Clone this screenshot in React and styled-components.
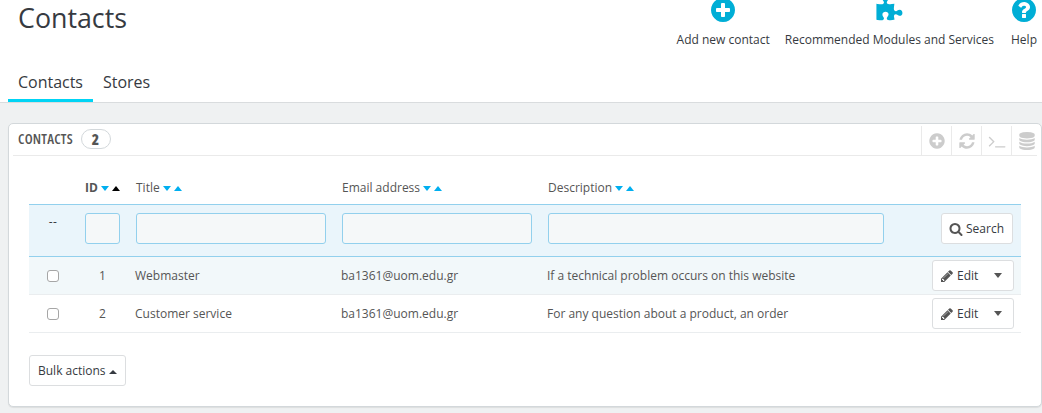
import React from "react";
import styled, { createGlobalStyle, css } from "styled-components";

const Global = createGlobalStyle`
  * { box-sizing: border-box; }
  html, body { margin: 0; height: 100%; overflow: hidden; }
  body {
    background: #eff1f2;
    color: #555;
    font: 12px/18px "Open Sans", "Noto Sans", sans-serif;
  }
`;

const glyphs = {
  plus: "M1344 960v-128q0-26-19-45t-45-19h-256v-256q0-26-19-45t-45-19h-128q-26 0-45 19t-19 45v256h-256q-26 0-45 19t-19 45v128q0 26 19 45t45 19h256v256q0 26 19 45t45 19h128q26 0 45-19t19-45v-256h256q26 0 45-19t19-45zm320-64q0 209-103 385.5t-279.5 279.5-385.5 103-385.5-103-279.5-279.5-103-385.5 103-385.5 279.5-279.5 385.5-103 385.5 103 279.5 279.5 103 385.5z",
  refresh: "M1639 1056q0 5-1 7-64 268-268 434.5t-478 166.5q-146 0-282.5-55t-243.5-157l-129 129q-19 19-45 19t-45-19-19-45v-448q0-26 19-45t45-19h448q26 0 45 19t19 45-19 45l-137 137q71 66 161 102t187 36q134 0 250-65t186-179q11-17 53-117 8-23 30-23h192q13 0 22.5 9.5t9.5 22.5zm25-800v448q0 26-19 45t-45 19h-448q-26 0-45-19t-19-45 19-45l138-138q-148-137-349-137-134 0-250 65t-186 179q-11 17-53 117-8 23-30 23h-199q-13 0-22.5-9.5t-9.5-22.5v-7q65-268 270-434.5t480-166.5q146 0 284 55.5t245 156.5l130-129q19-19 45-19t45 19 19 45z",
  terminal: "M649 983l-466 466q-10 10-23 10t-23-10l-50-50q-10-10-10-23t10-23l393-393-393-393q-10-10-10-23t10-23l50-50q10-10 23-10t23 10l466 466q10 10 10 23t-10 23zm1079 457v64q0 14-9 23t-23 9h-960q-14 0-23-9t-9-23v-64q0-14 9-23t23-9h960q14 0 23 9t9 23z",
  database: "M896 768q237 0 443-43t325-127v170q0 69-103 128t-280 93.5-385 34.5-385-34.5-280-93.5-103-128v-170q119 84 325 127t443 43zm0 768q237 0 443-43t325-127v170q0 69-103 128t-280 93.5-385 34.5-385-34.5-280-93.5-103-128v-170q119 84 325 127t443 43zm0-384q237 0 443-43t325-127v170q0 69-103 128t-280 93.5-385 34.5-385-34.5-280-93.5-103-128v-170q119 84 325 127t443 43zm0-1152q208 0 385 34.5t280 93.5 103 128v128q0 69-103 128t-280 93.5-385 34.5-385-34.5-280-93.5-103-128v-128q0-69 103-128t280-93.5 385-34.5z",
  search: "M1216 832q0-185-131.5-316.5t-316.5-131.5-316.5 131.5-131.5 316.5 131.5 316.5 316.5 131.5 316.5-131.5 131.5-316.5zm512 832q0 52-38 90t-90 38q-54 0-90-38l-343-342q-179 124-399 124-143 0-273.5-55.5t-225-150-150-225-55.5-273.5 55.5-273.5 150-225 225-150 273.5-55.5 273.5 55.5 225 150 150 225 55.5 273.5q0 220-124 399l343 343q37 37 37 90z",
  pencil: "M491 1536l91-91-235-235-91 91v107h128v128h107zm523-928q0-22-22-22-10 0-17 7l-542 542q-7 7-7 17 0 22 22 22 10 0 17-7l542-542q7-7 7-17zm-54-192l416 416-832 832h-416v-416zm683 96q0 53-37 90l-166 166-416-416 166-165q36-38 90-38 53 0 91 38l235 234q37 39 37 91z",
  help: "M1024 1376v-192q0-14-9-23t-23-9h-192q-14 0-23 9t-9 23v192q0 14 9 23t23 9h192q14 0 23-9t9-23zm256-672q0-88-55.5-163t-138.5-116-170-41q-243 0-371 213-15 24 8 42l132 100q7 6 19 6 16 0 25-12 53-68 86-92 34-24 86-24 48 0 85.5 26t37.5 59q0 38-20 61t-68 45q-63 28-115.5 86.5t-52.5 125.5v36q0 14 9 23t23 9h192q14 0 23-9t9-23q0-19 21.5-49.5t54.5-49.5q32-18 49-28.5t46-35 44.5-48 28-60.5 12.5-81zm384 192q0 209-103 385.5t-279.5 279.5-385.5 103-385.5-103-279.5-279.5-103-385.5 103-385.5 279.5-279.5 385.5-103 385.5 103 279.5 279.5 103 385.5z",
  puzzle: "M1755 1082q0 81-44.5 135t-123.5 54q-41 0-77.5-17.5t-59-38-56.5-38-71-17.5q-110 0-110 124 0 39 16 115t15 115v5q-22 0-33 1-34 3-97.5 11.5t-115.5 13.5-98 5q-61 0-103-26.5t-42-83.5q0-37 17.5-71t38-56.5 38-59 17.5-77.5q0-79-54-123.5t-135-44.5q-84 0-143 45.5t-59 127.5q0 43 15 83t33.5 64.5 33.5 53 15 50.5q0 45-46 89-37 35-117 35-95 0-245-24-9-2-27.5-4t-27.5-4l-13-2q-1 0-3-1-2 0-2-1v-1024q2 1 17.5 3.5t34 5 21.5 3.5q150 24 245 24 80 0 117-35 46-44 46-89 0-22-15-50.5t-33.5-53-33.5-64.5-15-83q0-82 59-127.5t144-45.5q80 0 134 44.5t54 123.5q0 41-17.5 77.5t-38 59-38 56.5-17.5 71q0 57 42 83.5t103 26.5q64 0 180-15t163-17v2q-1 2-3.5 17.5t-5 34-3.5 21.5q-24 150-24 245 0 80 35 117 44 46 89 46 22 0 50.5-15t53-33.5 64.5-33.5 83-15q82 0 127.5 59t45.5 143z",
};

const Svg = styled.svg`
  display: block;
  flex: none;
  width: ${(p) => p.$size}px;
  height: ${(p) => p.$size}px;
  fill: currentColor;
`;

const Icon = ({ name, size }) => (
  <Svg viewBox="0 0 1792 1792" $size={size} aria-hidden="true">
    <path d={glyphs[name]} />
  </Svg>
);

const Page = styled.div`
  width: 1042px;
  height: 413px;
  overflow: hidden;
`;

const Header = styled.header`
  display: grid;
  grid-template-rows: 63px 39px;
  height: 103px;
  background: #fff;
  border-bottom: 1px solid #d9dcde;
`;

const TitleBar = styled.div`
  display: flex;
  justify-content: space-between;
  align-items: flex-start;
  padding: 0 5px 0 18px;
`;

const Title = styled.h1`
  margin: 0;
  color: #363a41;
  font-size: 26.8px;
  font-weight: 400;
  line-height: 36px;
`;

const Tools = styled.nav`
  display: flex;
  gap: 15px;
`;

const Tool = styled.a`
  display: flex;
  flex-direction: column;
  align-items: center;
  color: #363a41;
  font-size: 12px;
  white-space: nowrap;

  &:last-child { margin: 0 -1px 0 1px; }

  svg {
    color: #00aed6;
    margin: -4px 0 7px;
  }
`;

const Tabs = styled.nav`
  display: flex;
  padding-left: 8px;
`;

const Tab = styled.a`
  padding: 7px 10px 0;
  color: #363a41;
  font-size: 16px;
  letter-spacing: -0.02px;
  line-height: 24px;
  ${(p) => p.$active && css`border-bottom: 3px solid #00d4f5;`}
`;

const Panel = styled.section`
  width: 1034px;
  height: 284px;
  margin: 20px 0 0 8px;
  background: #fff;
  border: 1px solid #d3d8db;
  border-radius: 5px;
  box-shadow: 0 1px 1px rgba(0, 0, 0, 0.08);
`;

const PanelHead = styled.div`
  display: flex;
  justify-content: space-between;
  height: 32px;
  margin: 0 4px;
  padding-left: 5px;
  border-bottom: 1px solid #eaeaea;
`;

const PanelTitle = styled.div`
  display: flex;
  align-items: center;
  gap: 9px;
  padding-bottom: 1px;
  color: #555;
`;

const Caption = styled.span`
  width: 54px;
  font-size: 14px;
  font-weight: 600;
  font-stretch: 75%;
  letter-spacing: 0.2px;
  white-space: nowrap;
`;

const Badge = styled.span`
  width: 30px;
  height: 20px;
  padding-right: 1px;
  border: 1px solid #d3d8db;
  border-radius: 10px;
  font-size: 15px;
  font-weight: 800;
  font-stretch: 75%;
  line-height: 18px;
  text-align: center;
`;

const PanelTools = styled.div`
  display: flex;
  margin-right: -4px;
  padding-top: 2px;
`;

const PanelTool = styled.a`
  display: flex;
  justify-content: center;
  align-items: center;
  width: 30px;
  border-left: 1px solid #eaeaea;
  color: #ccc;
`;

const Content = styled.div`
  padding: 22px 20px 0;
`;

const Row = styled.div`
  display: grid;
  grid-template-columns: 48px 51px 206px 206px 352px 129px;
  align-items: center;
`;

const HeadRow = styled(Row)`
  height: 26px;
  padding-bottom: 6px;
`;

const FilterRow = styled(Row)`
  height: 53px;
  align-items: start;
  padding-top: 8px;
  background: #eaf5fb;
  border-top: 1px solid #92d0ed;
  border-bottom: 1px solid #92d0ed;
`;

const DataRow = styled(Row)`
  height: 38px;
  border-bottom: 1px solid #eaedef;
  background: ${(p) => (p.$shaded ? "#f2f8fa" : "#fff")};
`;

const HeadCell = styled.div`
  display: flex;
  align-items: center;
  padding-left: 8px;
  height: 18px;
  white-space: nowrap;
  font-weight: ${(p) => (p.$sorted ? 700 : 400)};
`;

const Sorts = styled.span`
  display: flex;
  gap: 3px;
  margin-left: 3px;
`;

const Arrow = styled.i`
  border: 4px solid transparent;
  color: ${(p) => p.$color || "#00aff0"};
  ${(p) =>
    p.$up
      ? css`border-top: 0; border-bottom: 5px solid currentColor;`
      : css`border-bottom: 0; border-top: 5px solid currentColor;`}
`;

const EditArrow = styled(Arrow)`
  margin-right: 3px;
`;

const BulkArrow = styled(Arrow)`
  margin-top: 3px;
  border-bottom-width: 4px;
`;

const Cell = styled.div`
  padding-left: 7px;
  white-space: nowrap;
  ${(p) => p.$center && css`padding: 0; text-align: center;`}
`;

const Placeholder = styled(Cell)`
  color: #363a41;
  letter-spacing: 0.3px;
`;

const FilterCell = styled.div`
  padding: 0 8px;
`;

const FilterInput = styled.input`
  display: block;
  width: 100%;
  height: 31px;
  padding: 0 8px;
  background: #f5f8f9;
  border: 1px solid #92d0ed;
  border-radius: 3px;
  outline: 0;
`;

const Check = styled.input`
  appearance: none;
  display: block;
  width: 12px;
  height: 12px;
  margin: 1px auto 0;
  background: #fff;
  border: 1px solid #a6a6a6;
  border-radius: 3px;
`;

const Actions = styled.div`
  display: flex;
  justify-content: flex-end;
  padding-right: ${(p) => p.$inset}px;
`;

const Button = styled.button`
  display: flex;
  align-items: center;
  gap: ${(p) => p.$gap || 2}px;
  width: ${(p) => p.$width}px;
  height: 31px;
  padding: 0 8px;
  background: #fff;
  border: 1px solid #dcdee0;
  border-radius: 3px;
  color: #363a41;
  font: inherit;
  white-space: nowrap;

  svg {
    color: #555;
    margin: 0 1px 0 -1px;
  }
`;

const Spread = styled.span`
  flex: 1;
  text-align: left;
`;

const Footer = styled.div`
  padding-top: 22px;
`;

const columns = [
  { label: "ID", sorted: true },
  { label: "Title" },
  { label: "Email address" },
  { label: "Description" },
];

const contacts = [
  { id: 1, title: "Webmaster", email: "ba1361@uom.edu.gr", text: "If a technical problem occurs on this website" },
  { id: 2, title: "Customer service", email: "ba1361@uom.edu.gr", text: "For any question about a product, an order" },
];

export default function App() {
  return (
    <Page>
      <Global />
      <Header>
        <TitleBar>
          <Title>Contacts</Title>
          <Tools>
            <Tool><Icon name="plus" size={28} />Add new contact</Tool>
            <Tool><Icon name="puzzle" size={28} />Recommended Modules and Services</Tool>
            <Tool><Icon name="help" size={28} />Help</Tool>
          </Tools>
        </TitleBar>
        <Tabs>
          <Tab $active>Contacts</Tab>
          <Tab>Stores</Tab>
        </Tabs>
      </Header>
      <Panel>
        <PanelHead>
          <PanelTitle>
            <Caption>CONTACTS</Caption>
            <Badge>2</Badge>
          </PanelTitle>
          <PanelTools>
            <PanelTool><Icon name="plus" size={18} /></PanelTool>
            <PanelTool><Icon name="refresh" size={18} /></PanelTool>
            <PanelTool><Icon name="terminal" size={18} /></PanelTool>
            <PanelTool><Icon name="database" size={18} /></PanelTool>
          </PanelTools>
        </PanelHead>
        <Content>
          <HeadRow>
            <span />
            {columns.map((c) => (
              <HeadCell key={c.label} $sorted={c.sorted}>
                {c.label}
                <Sorts>
                  <Arrow />
                  <Arrow $up $color={c.sorted && "#000"} />
                </Sorts>
              </HeadCell>
            ))}
          </HeadRow>
          <FilterRow>
            <Placeholder $center>--</Placeholder>
            {columns.map((c) => (
              <FilterCell key={c.label}><FilterInput aria-label={c.label} /></FilterCell>
            ))}
            <Actions $inset={8}>
              <Button $width={72}><Icon name="search" size={14} />Search</Button>
            </Actions>
          </FilterRow>
          {contacts.map((c, i) => (
            <DataRow key={c.id} $shaded={i % 2 === 0}>
              <Check type="checkbox" />
              <Cell $center>{c.id}</Cell>
              <Cell>{c.title}</Cell>
              <Cell>{c.email}</Cell>
              <Cell>{c.text}</Cell>
              <Actions $inset={7}>
                <Button $width={82}>
                  <Icon name="pencil" size={14} />
                  <Spread>Edit</Spread>
                  <EditArrow $color="#555" />
                </Button>
              </Actions>
            </DataRow>
          ))}
          <Footer>
            <Button $width={97} $gap={3}>Bulk actions<BulkArrow $up $color="#363a41" /></Button>
          </Footer>
        </Content>
      </Panel>
    </Page>
  );
}
